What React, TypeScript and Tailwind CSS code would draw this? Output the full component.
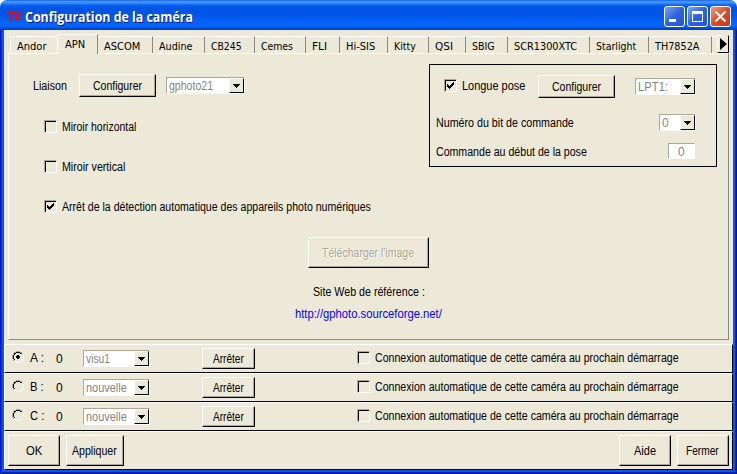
import { useLayoutEffect, useRef, useState, type ReactNode } from 'react';

/** Text condensed or widened horizontally so that it spans `w` pixels. */
function Fit({ children, w, className = '' }: { children: string; w: number; className?: string }) {
  const ref = useRef<HTMLSpanElement>(null);
  const [scale, setScale] = useState(1);
  useLayoutEffect(() => {
    if (ref.current) setScale(w / ref.current.offsetWidth);
  }, [w, children]);
  return (
    <span className={`flex shrink-0 ${className}`} style={{ width: w }}>
      <span
        ref={ref}
        className="inline-block shrink-0 origin-left whitespace-pre"
        style={{ transform: `scaleX(${scale})` }}
      >
        {children}
      </span>
    </span>
  );
}

function Button({ label, w, className, disabled = false }: { label: string; w: number; className: string; disabled?: boolean }) {
  return (
    <button
      className={`flex shrink-0 border-t border-l border-t-white border-l-white border-r border-b border-r-black border-b-black ${className}`}
    >
      <span className="flex h-full w-full items-center justify-center border-r border-b border-[#aca899] pt-[2px]">
        <Fit w={w} className={disabled ? 'text-[#aca899] [text-shadow:1px_1px_0_#fff]' : ''}>
          {label}
        </Fit>
      </span>
    </button>
  );
}

function Combo({ value, w, className }: { value: string; w: number; className: string }) {
  return (
    <div
      className={`flex h-[17px] shrink-0 border border-t-[#aca899] border-l-[#aca899] border-r-white border-b-white bg-white ${className}`}
    >
      <span className="flex h-[15px] grow items-start pt-px pl-[2px] text-[#858580]">
        <Fit w={w}>{value}</Fit>
      </span>
      <span className="flex h-[15px] w-[15px] shrink-0 items-center justify-center border border-t-white border-l-white border-r-black border-b-black bg-[#ece9d8]">
        <svg width="7" height="4" viewBox="0 0 7 4" shapeRendering="crispEdges">
          <path d="M0 0h7v1H6v1H5v1H4v1H3V3H2V2H1V1H0z" />
        </svg>
      </span>
    </div>
  );
}

function Check({ on = false }: { on?: boolean }) {
  return (
    <span className="block h-[13px] w-[13px] shrink-0 border border-t-[#aca899] border-l-[#aca899] border-r-white border-b-white">
      <span className="block h-[11px] w-[11px] border-t border-l border-black">
        {on && (
          <svg width="10" height="10" viewBox="0 0 10 10" shapeRendering="crispEdges">
            <path d="M1 3h1v1h1v1h1v-1h1v-1h1v-1h1v-1h1v3h-1v1h-1v1h-1v1h-1v1h-1v-1h-1v-1h-1z" />
          </svg>
        )}
      </span>
    </span>
  );
}

function Radio({ on = false }: { on?: boolean }) {
  return (
    <svg className="shrink-0" width="12" height="12" viewBox="0 0 12 12" shapeRendering="crispEdges">
      <path fill="#aca899" d="M4 0h4v1h2v1H8V1H4v1H2v2H1v4h1v2H1V8H0V4h1V2h1V1h2z" />
      <path fill="#000" d="M4 1h4v1h2v1H8V2H4v1H3v1H2v4h1v1H2V8H1V4h1V2h2z" />
      <path fill="#fff" d="M11 4h1v4h-1v2h-1v1H8v1H4v-1H2v-1h2v1h4v-1h2V8h1z" />
      {on && <path d="M5 4h2v1h1v2H7v1H5V7H4V5h1z" />}
    </svg>
  );
}

const tabs = [
  { name: 'ASCOM', text: 36, tab: 'w-[55px]' },
  { name: 'Audine', text: 33, tab: 'w-[52px]' },
  { name: 'CB245', text: 31, tab: 'w-[50px]' },
  { name: 'Cemes', text: 32, tab: 'w-[51px]' },
  { name: 'FLI', text: 15, tab: 'w-[34px]' },
  { name: 'Hi-SIS', text: 29, tab: 'w-[48px]' },
  { name: 'Kitty', text: 22, tab: 'w-[41px]' },
  { name: 'QSI', text: 18, tab: 'w-[37px]' },
  { name: 'SBIG', text: 23, tab: 'w-[42px]' },
  { name: 'SCR1300XTC', text: 63, tab: 'w-[82px]' },
  { name: 'Starlight', text: 40, tab: 'w-[59px]' },
  { name: 'TH7852A', text: 44, tab: 'w-[63px]' },
];

function TitleButton({ children, close = false }: { children: ReactNode; close?: boolean }) {
  return (
    <span
      className={`flex h-[21px] w-[21px] items-center justify-center rounded-[3px] border border-white ${
        close
          ? 'bg-linear-to-br from-[#eb9a82] via-[#dc4a26] to-[#c03c18]'
          : 'bg-linear-to-br from-[#7ba3f1] via-[#2e62dc] to-[#2456d8]'
      }`}
    >
      {children}
    </span>
  );
}

function TitleBar() {
  return (
    <div className="flex h-[30px] shrink-0 items-start rounded-t-[7px] bg-[linear-gradient(to_bottom,#0a4fd0_0,#3d95ff_1px,#3d8ffc_3px,#0764f0_5px,#0054e3_8px,#0056e5_15px,#0263fa_22px,#0366ff_26px,#0050d8_28px,#003bb4_30px)] pr-[6px] pl-[7px]">
      <svg className="mt-[10px]" width="16" height="13" viewBox="0 0 16 13" fill="none" stroke="#f00" strokeWidth="1.8">
        <path d="M0.3 4.2C1 2.2 2 2 3.5 2H8.2M5.8 2 3.2 11" />
        <path d="M12 0.8 8.8 10.5" strokeWidth="1.7" />
        <path d="M14.4 4 10.3 7 12.6 10 14.2 9.4" strokeWidth="1.4" />
      </svg>
      <span className="mt-[8px] ml-[2px] h-[18px] font-['Open_Sans','Noto_Sans',sans-serif] text-[14px] leading-[18px] font-bold text-white [text-shadow:1px_1px_0_#0a1883]">
        <Fit w={168}>Configuration de la caméra</Fit>
      </span>
      <div className="mt-[6px] ml-auto flex gap-[2px]">
        <TitleButton>
          <svg width="19" height="19" viewBox="0 0 19 19">
            <path fill="#fff" d="M4 12h7v3H4z" />
          </svg>
        </TitleButton>
        <TitleButton>
          <svg width="19" height="19" viewBox="0 0 19 19">
            <path fill="#fff" fillRule="evenodd" d="M4 4h11v11H4zM5 7v7h9V7z" />
          </svg>
        </TitleButton>
        <TitleButton close>
          <svg width="19" height="19" viewBox="0 0 19 19">
            <path stroke="#fff" strokeWidth="2.2" d="m4.5 4.5 10 10m0-10-10 10" />
          </svg>
        </TitleButton>
      </div>
    </div>
  );
}

function TabStrip() {
  return (
    <div className="flex h-[19px] items-end pl-[2px] font-['DejaVu_Sans_Condensed','DejaVu_Sans',sans-serif] text-[11px] leading-[14px]">
      <div className="flex h-[17px] w-[47px] shrink-0 rounded-tl-[2px] border-t border-l border-white pt-[3px] pl-[6px]">
        <Fit w={29}>Andor</Fit>
      </div>
      <div className="mb-[-1px] flex h-[20px] w-[41px] shrink-0 rounded-tl-[2px] border-t border-l border-white border-r border-r-[#8c8a80] bg-[#ece9d8] pt-[3px] pl-[7px]">
        <Fit w={20}>APN</Fit>
      </div>
      {tabs.map((t) => (
        <div
          key={t.name}
          className={`flex h-[17px] shrink-0 border-t border-r border-t-white border-r-[#8c8a80] pt-[3px] pl-[6px] ${t.tab}`}
        >
          <Fit w={t.text}>{t.name}</Fit>
        </div>
      ))}
      <span className="h-[17px] w-[5px] shrink-0 border-t border-white" />
      <span className="flex h-[18px] w-[12px] shrink-0 items-center justify-center border border-t-white border-l-white border-r-black border-b-black">
        <svg width="8" height="12" viewBox="0 0 8 12">
          <path d="M1 0v12l7-6z" />
        </svg>
      </span>
    </div>
  );
}

function LongExposure() {
  return (
    <div className="mt-[10px] h-[103px] w-[288px] shrink-0 border border-black">
      <div className="mt-[10px] flex h-[23px] items-start pl-[14px]">
        <span className="mt-[4px]">
          <Check on />
        </span>
        <span className="mt-[4px] ml-[5px] w-[76px]">
          <Fit w={63}>Longue pose</Fit>
        </span>
        <Button label="Configurer" w={49} className="h-[23px] w-[77px]" />
        <Combo value="LPT1:" w={30} className="mt-[3px] ml-[20px] w-[61px]" />
      </div>
      <div className="mt-[16px] flex h-[17px] items-start justify-between pr-[20px] pl-[6px]">
        <span className="mt-[2px]">
          <Fit w={138}>Numéro du bit de commande</Fit>
        </span>
        <Combo value="0" w={7} className="w-[37px]" />
      </div>
      <div className="mt-[12px] flex h-[16px] items-start justify-between pr-[21px] pl-[6px]">
        <span className="mt-[2px]">
          <Fit w={151}>Commande au début de la pose</Fit>
        </span>
        <span className="flex h-[16px] w-[27px] items-start justify-center border border-t-[#aca899] border-l-[#aca899] border-r-white border-b-white bg-white pt-px text-[#858580]">
          <Fit w={7}>0</Fit>
        </span>
      </div>
    </div>
  );
}

function CameraPanel() {
  return (
    <div className="h-[287px] w-[721px] border border-t-white border-l-white border-r-[#8c8a80] border-b-[#8c8a80]">
      <div className="flex h-[159px]">
        <div className="w-[420px] shrink-0 pt-[20px]">
          <div className="flex h-[23px] items-center pl-[24px]">
            <span className="w-[46px] pt-[2px]">
              <Fit w={34}>Liaison</Fit>
            </span>
            <Button label="Configurer" w={49} className="h-[23px] w-[77px]" />
            <Combo value="gphoto21" w={44} className="ml-[10px] w-[79px]" />
          </div>
          <div className="mt-[23px] flex h-[13px] gap-[5px] pl-[35px]">
            <Check />
            <Fit w={74}>Miroir horizontal</Fit>
          </div>
          <div className="mt-[27px] flex h-[13px] gap-[5px] pl-[35px]">
            <Check />
            <Fit w={63}>Miroir vertical</Fit>
          </div>
          <div className="mt-[27px] flex h-[13px] gap-[5px] pl-[35px]">
            <Check on />
            <Fit w={309}>Arrêt de la détection automatique des appareils photo numériques</Fit>
          </div>
        </div>
        <LongExposure />
      </div>
      <div className="mt-[24px] flex flex-col items-center">
        <Button label="Télécharger l'image" w={92} disabled className="h-[31px] w-[121px]" />
        <div className="mt-[17px] flex h-[16px]">
          <Fit w={112}>Site Web de référence :</Fit>
        </div>
        <div className="mt-[6px] flex h-[16px] text-[#0000ff]">
          <Fit w={147}>http://gphoto.sourceforge.net/</Fit>
        </div>
      </div>
    </div>
  );
}

const cameras = [
  { id: 'A :', view: 'visu1', w: 24, on: true },
  { id: 'B :', view: 'nouvelle', w: 41, on: false },
  { id: 'C :', view: 'nouvelle', w: 41, on: false },
];

export default function App() {
  return (
    <div className="flex h-[474px] w-[737px] flex-col overflow-hidden bg-white font-['Liberation_Sans','Arial',sans-serif] text-[12px] leading-[15px] text-black">
      <TitleBar />
      <div className="h-[444px] bg-[#0f55e6] px-[4px] pb-[4px] shadow-[inset_1px_0_0_#0019cf,inset_2px_0_0_#0831d9,inset_-1px_-1px_0_#00138c,inset_-2px_-2px_0_#0729b8]">
        <div className="h-[440px] bg-[#ece9d8]">
          <div className="h-[314px] pt-[4px] pl-[4px]">
            <TabStrip />
            <CameraPanel />
          </div>
          {cameras.map((c) => (
            <div
              key={c.id}
              className="flex h-[29px] items-start border border-t-white border-l-white border-r-black border-b-black pl-[7px]"
            >
              <span className="mt-[6px]">
                <Radio on={c.on} />
              </span>
              <span className="mt-[6px] ml-[6px] w-[26px]">
                <Fit w={14}>{c.id}</Fit>
              </span>
              <span className="mt-[7px] w-[27px]">
                <Fit w={7}>0</Fit>
              </span>
              <Combo value={c.view} w={c.w} className="mt-[5px] w-[67px]" />
              <Button label="Arrêter" w={31} className="mt-[3px] ml-[52px] h-[21px] w-[53px]" />
              <span className="mt-[6px] ml-[102px]">
                <Check />
              </span>
              <span className="mt-[6px] ml-[5px]">
                <Fit w={304}>Connexion automatique de cette caméra au prochain démarrage</Fit>
              </span>
            </div>
          ))}
          <div className="flex h-[39px] items-start gap-[6px] border border-t-white border-l-white border-r-black border-b-black pt-[3px] pr-[3px] pl-[3px]">
            <Button label="OK" w={16} className="h-[31px] w-[52px]" />
            <Button label="Appliquer" w={45} className="h-[31px] w-[58px]" />
            <span className="grow" />
            <Button label="Aide" w={22} className="h-[31px] w-[52px]" />
            <Button label="Fermer" w={33} className="h-[31px] w-[52px]" />
          </div>
        </div>
      </div>
    </div>
  );
}
